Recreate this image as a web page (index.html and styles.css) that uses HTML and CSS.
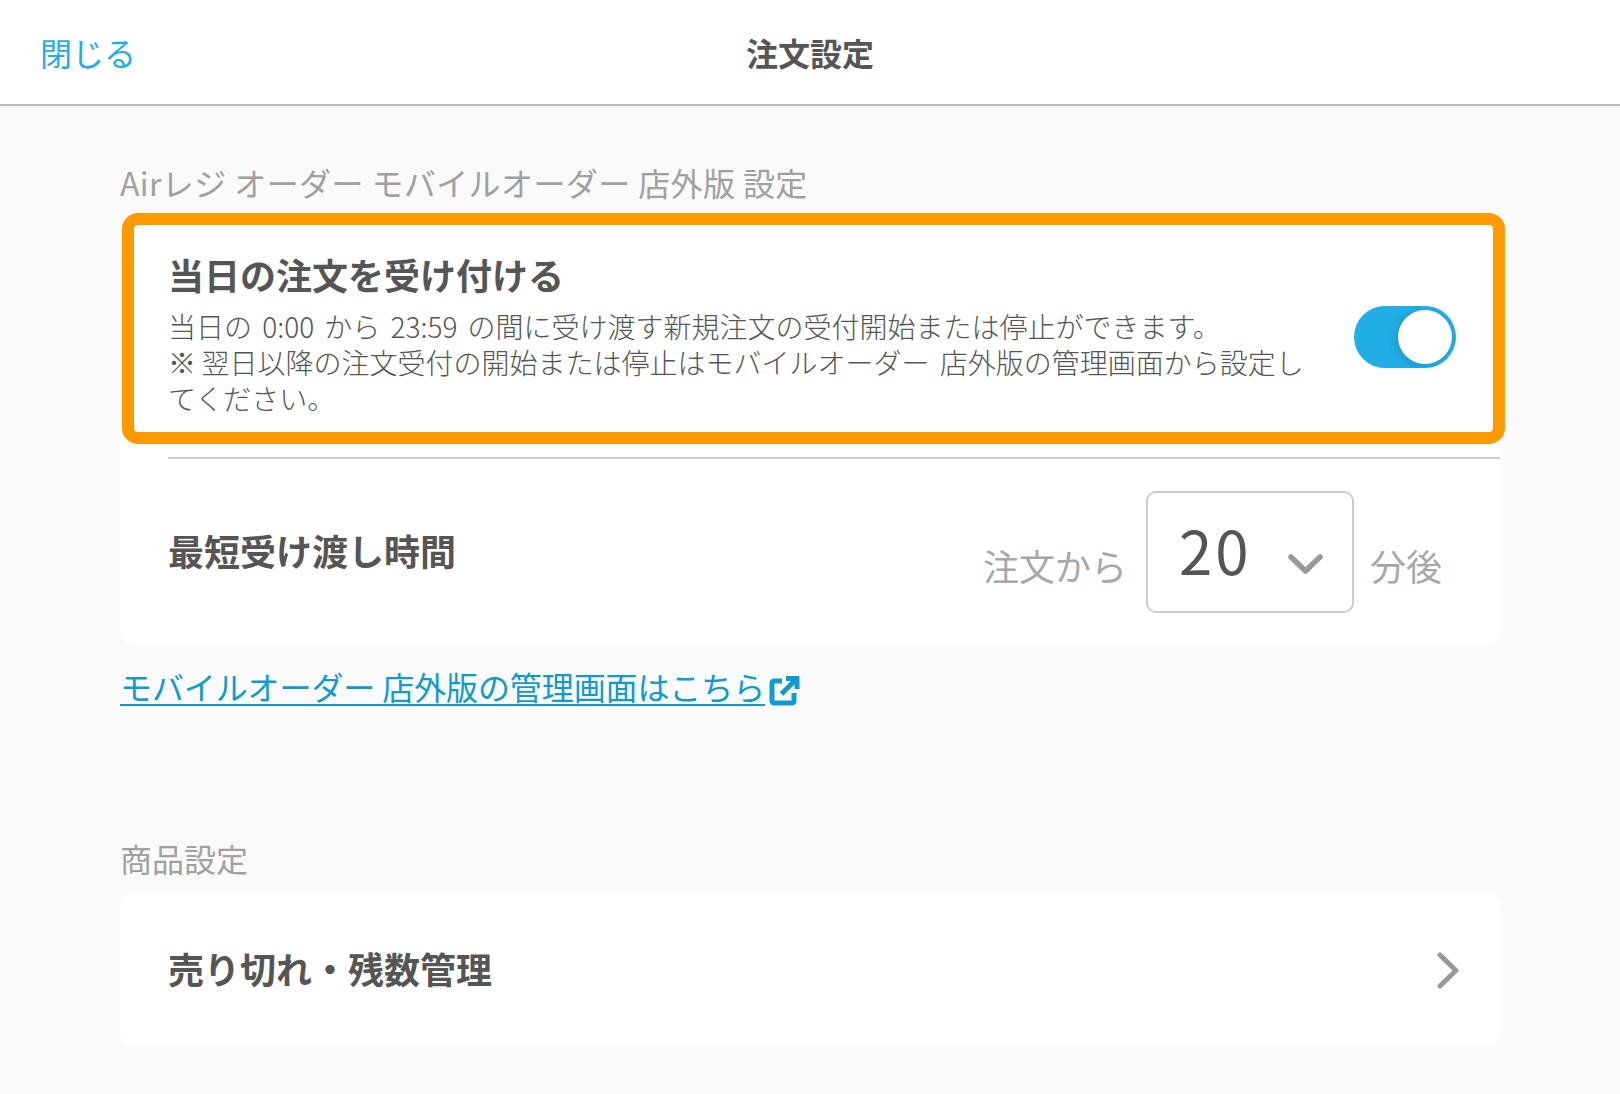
FILE: index.html
```html
<!DOCTYPE html>
<html lang="ja">
<head>
  <meta charset="UTF-8" />
  <meta name="viewport" content="width=device-width, initial-scale=1.0" />
  <title>注文設定</title>
  <link rel="stylesheet" href="styles.css">
</head>
<body>
  <header class="header">
    <a class="close">閉じる</a>
    <h1 class="header-title">注文設定</h1>
  </header>

  <main class="content">
    <h2 class="section-label">Airレジ オーダー モバイルオーダー 店外版 設定</h2>
    <div class="card">
      <div class="row row-today">
        <div class="row-text">
          <div class="row-title">当日の注文を受け付ける</div>
          <p class="row-desc">当日の 0:00 から 23:59 の間に受け渡す新規注文の受付開始または停止ができます。<br>※&#8201;翌日以降の注文受付の開始または停止はモバイルオーダー 店外版の管理画面から設定してください。</p>
        </div>
        <div class="toggle"><span class="knob"></span></div>
        <div class="highlight"></div>
      </div>
      <div class="row row-time">
        <div class="row-title">最短受け渡し時間</div>
        <div class="time-picker">
          <span class="unit">注文から</span>
          <div class="select">
            <span class="select-value">20</span>
            <svg class="select-arrow" width="35" height="20" viewBox="0 0 35 20">
              <path d="M3 3 L17.5 17 L32 3" fill="none" stroke="#999" stroke-width="5.5" stroke-linecap="round" stroke-linejoin="round" />
            </svg>
          </div>
          <span class="unit unit-after">分後</span>
        </div>
      </div>
    </div>

    <a class="admin-link"><span class="admin-link-text">モバイルオーダー 店外版の管理画面はこちら</span><svg class="external" width="31" height="31" viewBox="0 0 31 31">
        <path d="M13 6 H5 A2 2 0 0 0 3 8 V26 A2 2 0 0 0 5 28 H23 A2 2 0 0 0 25 26 V18" fill="none" stroke="#0f9ad0" stroke-width="5" />
        <path d="M17 3.5 H28 V14" fill="none" stroke="#0f9ad0" stroke-width="5" />
        <path d="M27 4.5 L12.5 19" fill="none" stroke="#0f9ad0" stroke-width="5" />
      </svg></a>

    <h2 class="section-label section-label-items">商品設定</h2>
    <div class="card">
      <div class="row row-items">
        <div class="row-title">売り切れ・残数管理</div>
        <svg class="chevron" width="22" height="37" viewBox="0 0 22 37">
          <path d="M3 3 L19 18.5 L3 34" fill="none" stroke="#999" stroke-width="5" stroke-linecap="round" stroke-linejoin="round" />
        </svg>
      </div>
    </div>
  </main>
</body>
</html>
```

FILE: styles.css
```css
body {
  margin: 0;
  min-height: 1094px;
  background-color: #fafafa;
  color: #555;
  font-family: "Noto Sans CJK JP", "Noto Sans", sans-serif;
}

.header {
  position: relative;
  display: flex;
  justify-content: center;
  align-items: center;
  height: 104px;
  background-color: #fff;
  border-bottom: 2px solid #b9b9b9;
}

.close {
  position: absolute;
  left: 40px;
  font-size: 32px;
  color: #20aee5;
}

.header-title {
  margin: 0;
  font-size: 32px;
  font-weight: 700;
}

.content {
  padding: 56px 120px 0;
}

.section-label {
  margin: 0 0 20px;
  font-size: 32px;
  line-height: 40px;
  font-weight: 400;
  letter-spacing: 0.4px;
  color: #a0a0a0;
}

.section-label-items {
  margin-top: 132px;
  margin-bottom: 15px;
  letter-spacing: 0;
}

.card {
  background-color: #fff;
  border-radius: 14px;
}

.row {
  display: flex;
  align-items: center;
  justify-content: space-between;
  margin-left: 48px;
}

.row-title {
  font-size: 36px;
  line-height: 44px;
  font-weight: 700;
}

.row-today {
  position: relative;
  gap: 40px;
  padding: 30px 44px 41px 0;
  border-bottom: 2px solid #ccc;
}

.row-text {
  flex: 1;
}

.row-desc {
  margin: 12px 0 0;
  font-size: 28px;
  line-height: 36px;
  font-weight: 300;
  word-spacing: 4px;
}

.toggle {
  display: flex;
  justify-content: flex-end;
  align-items: center;
  flex-shrink: 0;
  width: 102px;
  height: 62px;
  padding-right: 4px;
  box-sizing: border-box;
  border-radius: 31px;
  background-color: #20aee5;
  margin-top: 5px;
}

.knob {
  width: 54px;
  height: 54px;
  border-radius: 50%;
  background-color: #fff;
  box-shadow: -3px 2px 8px rgba(0, 0, 0, 0.12);
}

/* orange callout laid over the first row */
.highlight {
  position: absolute;
  top: -9px;
  left: -46px;
  width: 1359px;
  height: 207px;
  border: 12px solid #ff9900;
  border-radius: 16px;
  pointer-events: none;
}

.row-time {
  height: 185px;
  padding-right: 58px;
}

.row-time > .row-title {
  margin-bottom: 4px;
}

.time-picker {
  display: flex;
  align-items: center;
}

.unit {
  margin-top: 26px;
  font-size: 36px;
  color: #a8a8a8;
}

.unit-after {
  margin-left: 16px;
}

.select {
  display: flex;
  align-items: center;
  justify-content: space-between;
  box-sizing: border-box;
  width: 208px;
  height: 122px;
  margin-left: 19px;
  padding: 0 29px 0 31px;
  border: 2px solid #ccc;
  border-radius: 10px;
}

.select-value {
  margin-bottom: 6px;
  font-size: 60px;
  line-height: 1;
  letter-spacing: 3px;
}

.select-arrow {
  margin-top: 24px;
}

.admin-link {
  display: inline-flex;
  align-items: flex-end;
  margin-top: 24px;
  font-size: 32px;
  line-height: 36px;
  letter-spacing: -0.1px;
  color: #0f9ad0;
}

.admin-link-text {
  border-bottom: 2px solid #0f9ad0;
}

.external {
  margin-left: 4px;
}

.row-items {
  height: 154px;
  padding-right: 41px;
}

.row-items .row-title {
  margin-bottom: 4px;
}
```
